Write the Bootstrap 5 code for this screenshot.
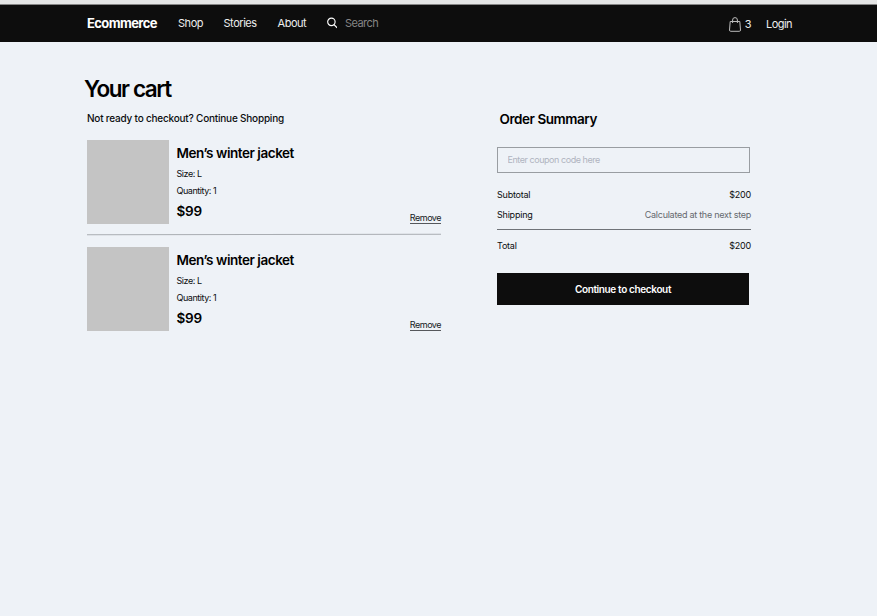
<!DOCTYPE html>
<html lang="en">
<head>
<meta charset="utf-8">
<meta name="viewport" content="width=device-width, initial-scale=1">
<title>Your cart</title>
<link href="https://cdn.jsdelivr.net/npm/bootstrap@5.3.0/dist/css/bootstrap.min.css" rel="stylesheet">
<style>
body{background:#eef2f7;color:#0b0d0f;font-family:Inter,"Liberation Sans",sans-serif;font-size:9px;line-height:17px;letter-spacing:-.45px;border-top:4px solid #e4e5e5}
.site-nav{height:38px;background:#0d0d0d;border-top:1px solid #858585;padding:0 85px 0 87px;font-size:11px;line-height:16px;color:#eee}
.site-nav a{color:#eee;text-decoration:none;white-space:nowrap}
.links{padding-bottom:2px}
.site-nav .brand{font-weight:700;font-size:13px;width:91px;letter-spacing:-.62px;color:#fff}
.w-shop{width:45.5px}.w-stories{width:54px}.w-about{width:49px}
.query{width:60px;background:none;border:0;padding:0;font-size:11px;line-height:16px;letter-spacing:-.55px;color:#fff;outline:0}
.query::placeholder{color:#858585;opacity:1}
.site-nav .bag{padding-top:1px}
.site-nav .login{padding:1px 0 0 15px;letter-spacing:-.55px}
.page{padding:32px 0 0 87px}
.cart{width:354px;margin-right:56px}
.title{font-size:22.5px;line-height:30px;font-weight:600;color:#000;letter-spacing:-1.4px;margin:0 0 6px -3px}
.ready{font-size:10px;line-height:16px;font-weight:500;letter-spacing:-.21px;margin:0 0 14px}
.thumb{width:82px;height:84px;background:#c4c4c4;margin-right:7.5px}
.name,.cost{font-size:13.5px;line-height:20px;font-weight:600;color:#000;letter-spacing:-.45px;margin:0}
.info{padding-top:3px}
.name{margin-bottom:2px}.cost{margin-top:2px;letter-spacing:-.25px}
.remove{color:#15181b;line-height:10px;letter-spacing:-.5px;text-decoration:none;border-bottom:1px solid #55585c}
.rule{height:1px;background:#a9adb2;margin:10px 0 12px;transform:rotate(-.12deg)}
.summary{width:254px;padding-top:35px}
.summary h2{font-size:13.5px;line-height:20px;font-weight:600;color:#000;letter-spacing:-.45px;margin:0 0 18px 2.5px}
.coupon{width:253px;height:26px;min-height:0;background:transparent;border:1px solid #999da2;border-radius:0;padding:0 9.5px 2px;font-size:9px;letter-spacing:-.45px}
.coupon::placeholder{color:#b0b4c0}
.sums{padding-top:13px;letter-spacing:-.22px}
.line-b{margin:3px 0 6px}
.later{color:#65696e;letter-spacing:-.27px}
.total{border-top:1px solid #6f7378;padding-top:7px}
.checkout{width:252px;height:32px;margin-top:19px;background:#0d0d0d;color:#fff;border:0;border-radius:0;font-size:10px;font-weight:600;letter-spacing:-.36px;padding:0}
</style>
</head>
<body>
<nav class="site-nav d-flex align-items-center">
  <div class="links d-flex align-items-center">
    <a class="brand" href="#">Ecommerce</a>
    <a class="w-shop" href="#">Shop</a>
    <a class="w-stories" href="#">Stories</a>
    <a class="w-about" href="#">About</a>
    <svg class="me-2" width="10.500" height="12" viewBox="0 0 11 12" fill="none" stroke="#fff" stroke-width="1.2"><circle cx="4.6" cy="4.8" r="3.9"/><path d="M7.3 7.6 10.6 11"/></svg>
    <input class="query" type="text" placeholder="Search" aria-label="Search">
  </div>
  <a class="bag ms-auto d-flex align-items-center" href="#"><svg width="12" height="15" viewBox="0 0 12 15" fill="none" stroke="#bbb" stroke-width="1"><path d="M1.200 4.500h9.600l.7 8.600q0 1.200-1.200 1.200H1.700Q.5 14.300.5 13.100zM3.600 6V3q0-2.400 2.400-2.400T8.400 3v3"/></svg><span class="ps-1">3</span></a>
  <a class="login" href="#">Login</a>
</nav>
<main class="page d-flex align-items-start">
  <section class="cart">
    <h1 class="title">Your cart</h1>
    <p class="ready">Not ready to checkout? Continue Shopping</p>
    <article class="d-flex">
      <div class="thumb"></div>
      <div class="info"><h2 class="name">Men’s winter jacket</h2><div>Size: L</div><div>Quantity: 1</div><p class="cost">$99</p></div>
      <a class="remove ms-auto align-self-end" href="#">Remove</a>
    </article>
    <div class="rule"></div>
    <article class="d-flex">
      <div class="thumb"></div>
      <div class="info"><h2 class="name">Men’s winter jacket</h2><div>Size: L</div><div>Quantity: 1</div><p class="cost">$99</p></div>
      <a class="remove ms-auto align-self-end" href="#">Remove</a>
    </article>
  </section>
  <aside class="summary">
    <h2>Order Summary</h2>
    <input class="form-control coupon" type="text" placeholder="Enter coupon code here" aria-label="Coupon code">
    <div class="sums">
      <div class="d-flex justify-content-between"><span>Subtotal</span><span>$200</span></div>
      <div class="d-flex justify-content-between line-b"><span>Shipping</span><span class="later">Calculated at the next step</span></div>
      <div class="d-flex justify-content-between total"><span>Total</span><span>$200</span></div>
    </div>
    <button class="btn checkout" type="button">Continue to checkout</button>
  </aside>
</main>
<script src="https://cdn.jsdelivr.net/npm/bootstrap@5.3.0/dist/js/bootstrap.bundle.min.js"></script>
</body>
</html>
